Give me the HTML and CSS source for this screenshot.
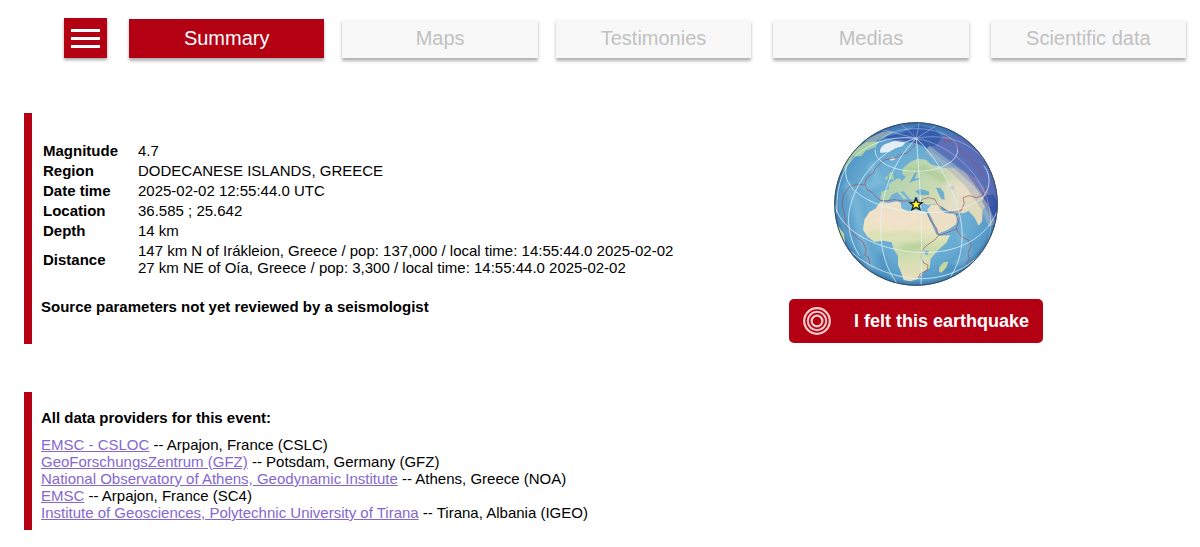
FILE: index.html
```html
<!DOCTYPE html>
<html lang="en">
<head>
<meta charset="utf-8">
<meta name="viewport" content="width=device-width, initial-scale=1">
<title>Earthquake summary</title>
<link rel="stylesheet" href="styles.css">
</head>
<body>
<header class="topbar">
  <button class="menu" type="button" aria-label="Menu"><span class="menu-line"></span><span class="menu-line"></span><span class="menu-line"></span></button>
  <nav class="tabs">
    <a class="tab tab-active" href="#summary">Summary</a>
    <a class="tab" href="#maps">Maps</a>
    <a class="tab" href="#testimonies">Testimonies</a>
    <a class="tab tab-spaced" href="#medias">Medias</a>
    <a class="tab tab-spaced" href="#scientific">Scientific data</a>
  </nav>
</header>
<main class="content">
  <section class="overview" id="summary">
    <div class="panel panel-event">
      <table class="facts">
        <tbody>
          <tr><th scope="row">Magnitude</th><td>4.7</td></tr>
          <tr><th scope="row">Region</th><td>DODECANESE ISLANDS, GREECE</td></tr>
          <tr><th scope="row">Date time</th><td>2025-02-02 12:55:44.0 UTC</td></tr>
          <tr><th scope="row">Location</th><td>36.585 ; 25.642</td></tr>
          <tr><th scope="row">Depth</th><td>14 km</td></tr>
          <tr><th scope="row">Distance</th><td>147 km N of Irákleion, Greece / pop: 137,000 / local time: 14:55:44.0 2025-02-02<br>27 km NE of Oía, Greece / pop: 3,300 / local time: 14:55:44.0 2025-02-02</td></tr>
        </tbody>
      </table>
      <p class="review">Source parameters not yet reviewed by a seismologist</p>
    </div>
    <aside class="locator">
      <svg class="globe" viewBox="40 37 492 492" role="img" aria-label="Globe centred on the epicentre">
        <defs>
          <clipPath id="disc"><circle cx="286" cy="283" r="245"/></clipPath>
          <radialGradient id="sea" cx="286" cy="283" r="245" gradientUnits="userSpaceOnUse">
            <stop offset="0" stop-color="#7bb8da"/><stop offset=".7" stop-color="#68abd2"/><stop offset=".94" stop-color="#559ac8"/><stop offset="1" stop-color="#3b709f"/>
          </radialGradient>
          <linearGradient id="africa" x1="0" y1="275" x2="0" y2="512" gradientUnits="userSpaceOnUse">
            <stop offset="0" stop-color="#eee0c9"/><stop offset=".36" stop-color="#eee3c4"/><stop offset=".48" stop-color="#dbe2b9"/><stop offset=".62" stop-color="#c9daac"/><stop offset=".78" stop-color="#d8dfb5"/><stop offset="1" stop-color="#e9debb"/>
          </linearGradient>
          <linearGradient id="eurasia" x1="220" y1="180" x2="450" y2="320" gradientUnits="userSpaceOnUse">
            <stop offset="0" stop-color="#b1d2ae"/><stop offset=".5" stop-color="#cbdab3"/><stop offset=".75" stop-color="#e5dec8"/><stop offset="1" stop-color="#e0dab9"/>
          </linearGradient>
          <filter id="soft" x="-10%" y="-10%" width="120%" height="120%"><feGaussianBlur stdDeviation="2"/></filter>
          <filter id="haze" x="-20%" y="-20%" width="140%" height="140%"><feGaussianBlur stdDeviation="7"/></filter>
        </defs>
        <g clip-path="url(#disc)">
          <rect x="40" y="37" width="492" height="492" fill="url(#sea)"/>
          <g filter="url(#haze)" fill="none" opacity=".45">
            <path d="M80 220L110 300L125 400L155 480" stroke="#8dc5df" stroke-width="24"/>
            <path d="M150 160L175 215L130 235" stroke="#91cae0" stroke-width="22"/>
            <path d="M415 370L445 430L400 475" stroke="#8bbfdb" stroke-width="22"/>
            <path d="M60 390L95 460L130 500M180 430L200 500M360 480L440 470" stroke="#3c84b7" stroke-width="16"/>
          </g>
          <g filter="url(#soft)">
            <path fill="#a8cda5" d="M60 190L96 125L145 90L175 96L160 114L135 123L122 140L98 140L84 162Z"/>
            <path fill="#c9dcb7" d="M128 94L185 67L220 65L196 81L160 96Z"/>
            <path fill="#e3edf3" d="M180 130Q173 116 192 104L220 94L240 90L256 96L245 110L224 116L206 126Z"/>
            <path fill="#d6e3d8" d="M206 147L220 142L223 150L211 153Z"/>
            <path fill="#bfd79b" d="M40 340L53 350L70 372L73 399L58 405L42 370Z"/>
            <path fill="url(#eurasia)" d="M182 246L205 238L203 223L222 211L235 205L244 214L256 201L244 192L248 174L268 158L290 147L316 150L332 165L370 174L410 174L465 205L514 260L519 290L500 285L486 300L484 335L474 348L462 324L444 304L428 311L398 308L376 300L365 292L352 294L342 282L322 286L297 277L292 261L279 264L278 273L267 267L248 244L239 248L259 266L250 269L230 247L213 255L204 270L191 275L179 269Z"/>
            <path fill="#a7cea1" d="M204 191L214 187L220 204L217 211L205 208ZM193 202L201 199L202 208L193 211Z"/>
            <path fill="url(#africa)" d="M179 276L202 280L229 275L240 279L242 295L263 306L284 300L318 307L324 324L340 350L354 378L388 377L378 398L350 424L330 447L327 474L309 487L292 508L269 515L249 511L242 490L232 466L232 438L218 418L213 398L188 393L162 397L140 381L127 360L131 330L146 307L164 297Z"/>
            <path fill="#eddfc6" d="M319 300L333 284L348 287L361 300L375 309L388 308L411 320L406 344L382 360L352 372L340 346Z"/>
            <path fill="#c6d79e" d="M356 472L369 458L383 456L376 475L362 489L355 486Z"/>
            <path fill="#6caed0" d="M284 245L297 238L309 240L325 246L325 256L296 257ZM346 234L359 235L370 249L372 270L362 268L353 251ZM387 230L401 228L400 239L389 240ZM312 423L324 424L322 435L312 434ZM266 220L277 199L285 183L292 185L282 207L297 205L295 210L278 214Z"/>
            <path fill="none" stroke="#6fa9ca" stroke-width="7" d="M321 309L336 340L351 374M362 294L374 306L393 309"/>
          </g>
          <g filter="url(#haze)" fill="none" opacity=".75">
            <path d="M157 338L190 320L245 336L294 321" stroke="#f5e1d3" stroke-width="16"/>
            <path d="M145 369L200 378L250 369L315 382" stroke="#d5dda9" stroke-width="12"/>
            <path d="M245 417L277 412L309 406" stroke="#b4cf96" stroke-width="22"/>
            <path d="M255 183L311 178L350 198L377 217" stroke="#a7ca92" stroke-width="18"/>
            <path d="M374 226L420 239L441 266" stroke="#eadfc8" stroke-width="22"/>
          </g>
          <g filter="url(#soft)">
            <path fill="#3c62b4" fill-opacity=".45" d="M125 98L190 94L240 91L285 98L335 128L400 176L458 228L500 281L526 352L560 280V10H140Z"/>
            <path fill="#6264b2" fill-opacity=".65" d="M331 110L367 75L440 84L510 160L545 280L520 325L485 255L430 182Z"/>
            <path fill="#2b46a2" fill-opacity=".6" d="M190 82L242 70L294 48L342 58L365 82L346 106L319 114L281 99L240 97Z"/>
            <path fill="#2546a2" fill-opacity=".65" d="M496 255L517 255L540 290L520 362L510 324L484 275Z"/>
            <path fill="none" stroke="#aeb3bf" stroke-opacity=".55" stroke-width="24" d="M319 118L398 178L447 226L492 292L515 347"/>
          </g>
          <g fill="none" stroke="#a34859" stroke-width="2.4" stroke-opacity=".8" stroke-linejoin="round">
            <path d="M287 91L278 112L258 131L240 135L228 143L209 147L190 151L180 160L165 174L158 190L139 203L132 222L139 239L154 248L165 261L179 272L199 273L223 270L251 275L267 273L276 286L290 290L306 268L324 264L343 269L350 284L369 297L385 307L407 306L423 299L431 282L427 264L444 258L467 264L485 258L496 235"/>
            <path d="M131 226L108 224L87 231L68 257L64 285L72 318L76 351L95 370L112 386L127 398L136 419L132 435L144 444L148 465"/>
            <path d="M323 315L331 336L348 356L353 378L342 391L317 408L303 424L302 447L309 460L322 466L319 482L299 492L292 505M354 377L377 370L407 357L421 380L443 391L452 407L442 430L446 447L437 462M407 357L414 336L406 316L425 300M376 72L370 97L394 92L412 111L425 133L447 143L469 171L486 202"/>
          </g>
          <g fill="none" stroke="#dff6fb" stroke-width="3">
            <g stroke-opacity=".75">
              <path d="M163 121C163 157 219 185 287 185C355 185 411 157 411 121"/>
              <path d="M78 168C60 225 122 273 206 294C302 320 425 311 478 270C514 242 510 190 489 168"/>
              <path d="M41 282C56 356 149 412 265 426C387 440 489 400 529 306"/>
              <path d="M92 426C133 465 202 500 287 507C372 510 444 478 492 419"/>
              <path d="M287 86C183 114 101 210 85 309C79 354 93 401 116 438M287 86C223 147 177 249 180 359C181 425 196 476 228 519M287 86C296 190 308 373 301 524M287 86C352 149 407 243 422 342C430 404 418 459 390 500"/>
              <path d="M287 86C196 75 113 112 76 174C53 216 47 260 49 311"/>
            </g>
            <g stroke-opacity=".35">
              <path d="M163 121C163 86 219 57 287 57C355 57 411 86 411 121"/>
              <path d="M287 86C387 105 470 181 499 267C514 318 514 365 498 405M287 86L188 61M287 86L241 43M287 86L296 38M287 86L350 46M287 86C380 69 454 98 502 165"/>
            </g>
          </g>
        </g>
        <circle cx="286" cy="283" r="244" fill="none" stroke="#344c65" stroke-width="3"/>
        <path d="M286 266L291 278L304 279L294 287L298 300L286 293L274 300L278 287L268 279L281 278Z" fill="#fff52e" stroke="#24251c" stroke-width="4"/>
      </svg>
      <button class="felt" type="button">
        <svg class="felt-icon" viewBox="0 0 28 28" aria-hidden="true"><g fill="none" stroke="#f6cccc"><circle cx="14" cy="14" r="12.8" stroke-width="2.2"/><circle cx="14" cy="14" r="9.2" stroke-width="2"/><circle cx="14" cy="14" r="5.4" stroke-width="2.2"/></g></svg>
        <span>I felt this earthquake</span>
      </button>
    </aside>
  </section>
  <section class="panel panel-providers">
    <h2 class="providers-title">All data providers for this event:</h2>
    <ul class="providers">
      <li><a href="#csloc">EMSC - CSLOC</a> -- Arpajon, France (CSLC)</li>
      <li><a href="#gfz">GeoForschungsZentrum (GFZ)</a> -- Potsdam, Germany (GFZ)</li>
      <li><a href="#noa">National Observatory of Athens, Geodynamic Institute</a> -- Athens, Greece (NOA)</li>
      <li><a href="#emsc">EMSC</a> -- Arpajon, France (SC4)</li>
      <li><a href="#igeo">Institute of Geosciences, Polytechnic University of Tirana</a> -- Tirana, Albania (IGEO)</li>
    </ul>
  </section>
</main>
</body>
</html>
```
FILE: styles.css
```css
* { box-sizing: border-box; }
body {
  margin: 0;
  background: #fff;
  color: #000;
  font: 15px/17px "Liberation Sans", Arial, sans-serif;
}
.topbar {
  display: flex;
  align-items: flex-end;
  gap: 22px;
  padding: 18px 14px 0 64px;
}
.menu {
  display: flex;
  flex-direction: column;
  justify-content: center;
  gap: 5px;
  width: 43px;
  height: 40px;
  padding: 0 7px;
  border: 0;
  background: #b40013;
  box-shadow: 0 2px 3px rgba(0, 0, 0, .35);
}
.menu-line { height: 3px; background: #fff; }
.tabs { display: flex; flex: 1; gap: 18px; }
.tab {
  flex: 1 1 0;
  padding: 7px 0 8px;
  background: #f8f8f8;
  color: #c1c1c1;
  font-size: 20px;
  line-height: 24px;
  text-align: center;
  text-decoration: none;
  white-space: nowrap;
  box-shadow: 0 3px 3px rgba(0, 0, 0, .3);
}
.tab-active { background: #b40013; color: #fff; }
.tab-spaced { margin-left: 4px; }
.content { padding: 55px 24px 17px; }
.overview {
  display: grid;
  grid-template-columns: 1fr 440px;
  padding-right: 40px;
}
.panel { border-left: 8px solid #b40013; padding-left: 9px; }
.panel-event { padding-top: 28px; padding-bottom: 28px; }
.facts { border-collapse: collapse; margin-left: 2px; }
.facts th, .facts td { padding: 1px 0 2px; text-align: left; vertical-align: middle; }
.facts th { width: 95px; font-weight: bold; }
.review { margin: 20px 0 0; font-weight: bold; }
.locator {
  display: flex;
  flex-direction: column;
  align-items: center;
  gap: 13px;
  padding-top: 9px;
}
.globe { display: block; width: 164px; height: 164px; }
.felt {
  display: flex;
  align-items: center;
  gap: 23px;
  height: 44px;
  margin-bottom: 1px;
  padding: 0 14px;
  border: 0;
  border-radius: 5px;
  background: #b40013;
  color: #fff;
  font: bold 18px/22px "Liberation Sans", Arial, sans-serif;
  white-space: nowrap;
}
.felt-icon { width: 28px; height: 28px; }
.panel-providers { margin-top: 48px; padding-top: 17px; padding-bottom: 9px; }
.providers-title { margin: 0 0 10px; font-size: 15px; line-height: 17px; }
.providers { margin: 0; padding: 0; list-style: none; }
.providers a { color: #8468cf; }
```
